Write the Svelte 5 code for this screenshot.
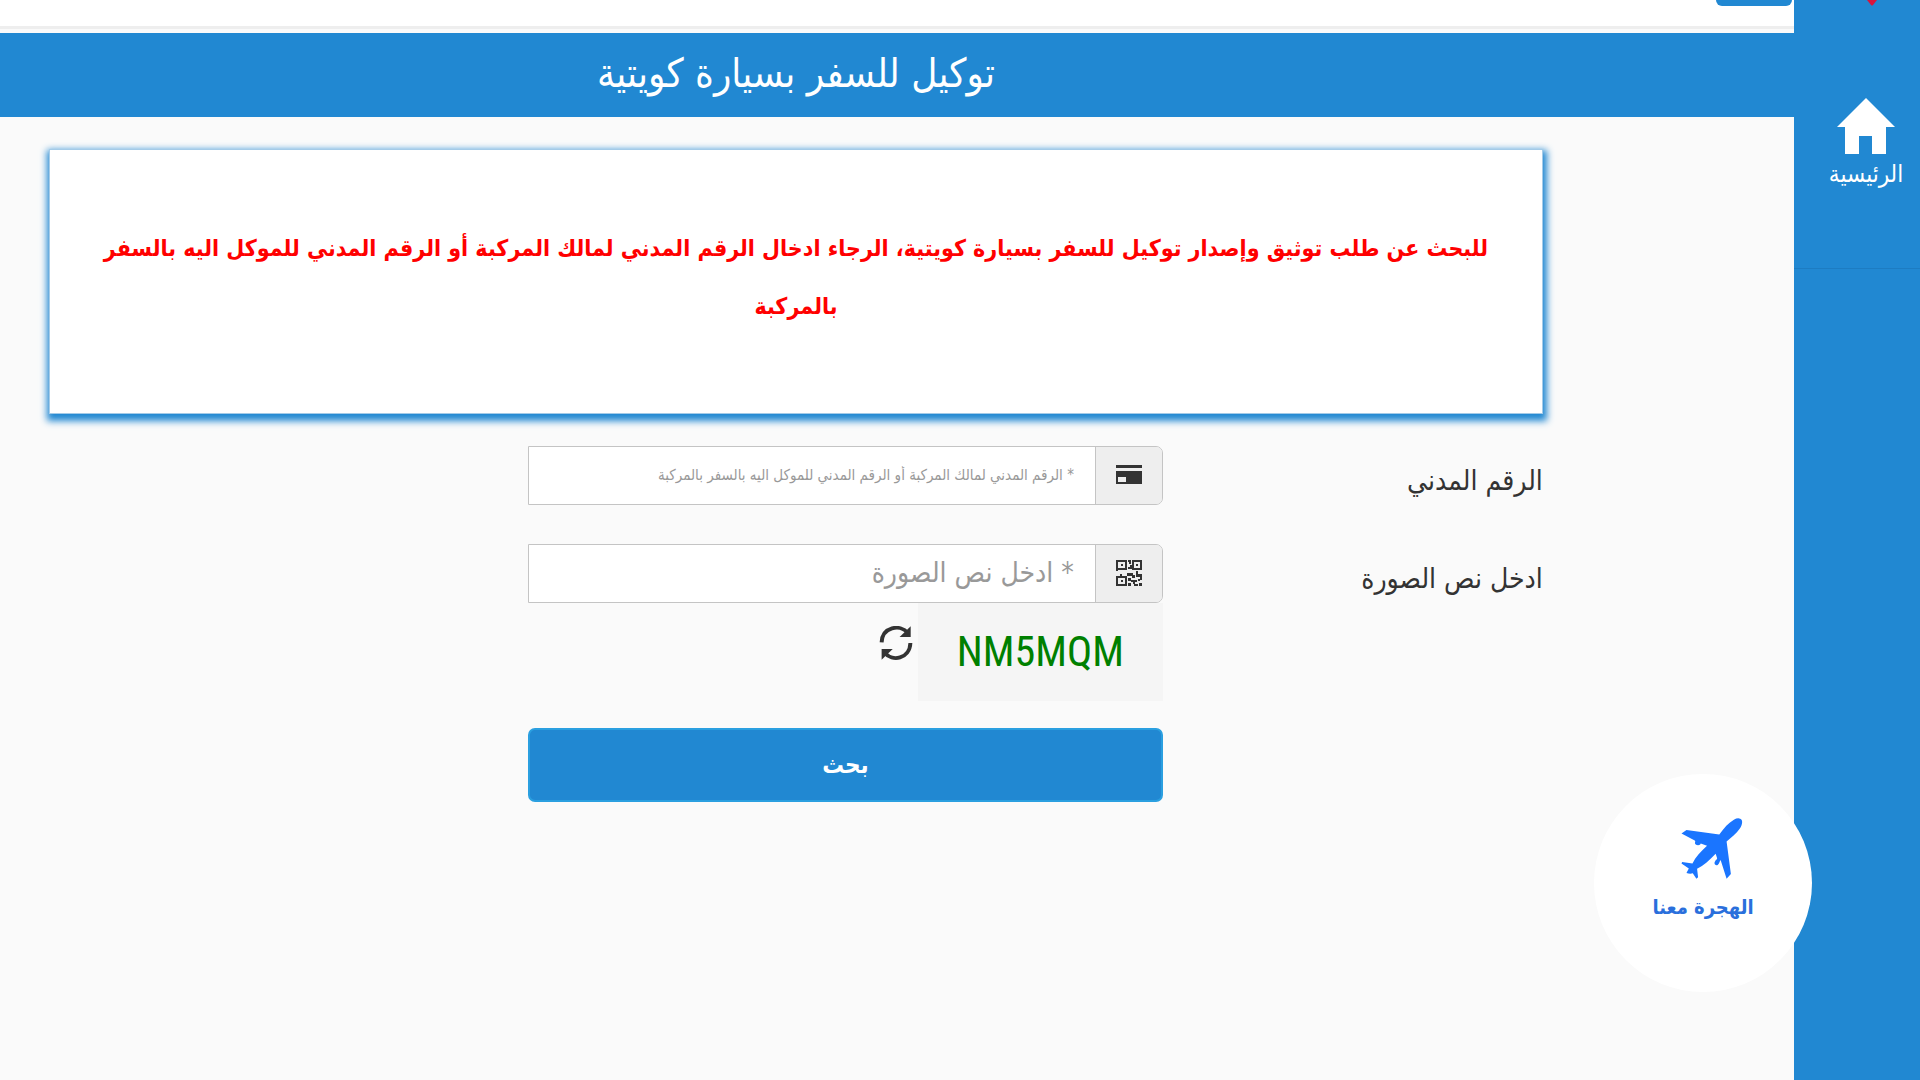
<script>
  let civilId = "";
  let captchaText = "";

  const captcha = "NM5MQM";
</script>

<div class="page" dir="rtl" lang="ar">
  <aside class="sidebar">
    <div class="logo">
      <svg width="12" height="6" viewBox="0 0 12 6" aria-hidden="true">
        <path d="M1 0h10L7 5q-1 1-2 0z" fill="#d9143c" />
      </svg>
    </div>
    <nav>
      <a class="nav-item" href="/">
        <svg width="60" height="56" viewBox="0 0 60 56" fill="#fff" aria-hidden="true">
          <path d="M30 0 59 29H50V56H36V38H23V56H9V29H1z" />
        </svg>
        <span>الرئيسية</span>
      </a>
    </nav>
  </aside>

  <div class="content">
    <header class="topbar">
      <button class="menu-button" type="button" aria-label="القائمة"></button>
    </header>

    <h1 class="title">توكيل للسفر بسيارة كويتية</h1>

    <main>
      <p class="notice">
        للبحث عن طلب توثيق وإصدار توكيل للسفر بسيارة كويتية، الرجاء ادخال الرقم المدني لمالك المركبة أو الرقم المدني للموكل اليه بالسفر بالمركبة
      </p>

      <form on:submit|preventDefault>
        <div class="row">
          <label for="civil-id">الرقم المدني</label>
          <div class="input-group">
            <span class="addon">
              <svg width="26" height="22" viewBox="0 0 26 22" fill="#333" aria-hidden="true">
                <path d="M0 0h26v3H0z" />
                <path fill-rule="evenodd" d="M0 6h26v13H0zM2 12v5h8v-5z" />
              </svg>
            </span>
            <input
              id="civil-id"
              class="small"
              type="text"
              placeholder="* الرقم المدني لمالك المركبة أو الرقم المدني للموكل اليه بالسفر بالمركبة"
              bind:value={civilId}
            />
          </div>
        </div>

        <div class="row">
          <label for="captcha">ادخل نص الصورة</label>
          <div class="field">
            <div class="input-group">
              <span class="addon">
                <svg width="26" height="28" viewBox="0 0 26 28" fill="#333" aria-hidden="true">
                  <path
                    fill-rule="evenodd"
                    d="M0 0h11v10H2v1H0zM2 2v6h7V2zM16 0h10v10H16zM18 2v6h6V2zM0 16h4v-2h2v2h5v10H0zM2 18v6h7v-6z"
                  />
                  <path
                    d="M5 4h2v2H5zM20 4h2v2h-2zM5 20h2v2H5zM12 0h3v4h-2V2h-1zM14 5h2v4h-4V7h2zM20 11h2v3h4v3h-6zM11 13h6v2h2v3h-3v-2h-5zM12 18h3v3h-3zM15 20h6v2h-2v2h-2v-2h-2zM12 23h3v3h-3zM18 24h4v2h-4zM22 19h2v2h-2zM24 17h2v3h-2zM23 23h3v3h-3z"
                  />
                </svg>
              </span>
              <input
                id="captcha"
                type="text"
                placeholder="* ادخل نص الصورة"
                bind:value={captchaText}
              />
            </div>
            <div class="captcha">
              <span class="captcha-image">{captcha}</span>
              <button class="refresh" type="button" aria-label="تحديث">
                <svg width="34" height="34" viewBox="54 255 104 104" aria-hidden="true">
                  <g fill="none" stroke="#333" stroke-width="12">
                    <path d="M62 305C64 258 118 248 142 276" />
                    <path d="M150 307C148 356 94 366 71 336" />
                  </g>
                  <path d="M151 256V289H117z" fill="#333" />
                  <path d="M62 358V325H96z" fill="#333" />
                </svg>
              </button>
            </div>
          </div>
        </div>

        <div class="row">
          <button class="submit" type="submit">بحث</button>
        </div>
      </form>
    </main>
  </div>

  <a class="badge" href="/">
    <svg width="62" height="61" viewBox="274 142 186 184" fill="#1a75ff" aria-hidden="true">
      <path
        d="M452 144C461 147 459 162 451 174 440 190 425 202 411 213L424 311 411 325 393 269C389 274 390 280 384 284 377 287 372 280 376 273 378 267 384 267 382 262L378 250C360 269 342 286 322 295L325 321 320 325 309 309Q300 311 290 308L297 294 275 279 277 275 308 279C317 260 334 243 352 226L333 219C332 225 322 226 317 221 313 216 319 213 315 210L275 189 290 178 389 192C403 172 417 156 433 147Q444 141 452 144z"
      />
    </svg>
    <span>الهجرة معنا</span>
  </a>
</div>

<style>
  :global(body) {
    background: #fafafa;
  }

  .page {
    display: flex;
    min-height: 100vh;
    font-family: "DejaVu Sans Condensed", "DejaVu Sans", sans-serif;
    color: #333;
  }

  .sidebar {
    flex: 0 0 126px;
    background: #2188d2;
  }

  .logo {
    display: flex;
    justify-content: center;
    height: 48px;
    padding-left: 30px;
  }

  .nav-item {
    display: flex;
    flex-direction: column;
    align-items: center;
    gap: 2px;
    height: 170px;
    padding: 50px 0 0 18px;
    border-bottom: 1px solid #1d7cc2;
    color: #fff;
    font-size: 24px;
    line-height: 36px;
    text-decoration: none;
  }

  .content {
    flex: 1;
    min-width: 0;
  }

  .topbar {
    height: 26px;
    padding: 0 2px;
    background: #fff;
    border-bottom: 3px solid #eee;
  }

  .menu-button {
    display: block;
    width: 76px;
    height: 6px;
    padding: 0;
    border: 0;
    border-radius: 0 0 6px 6px;
    background: #2188d2;
  }

  .title {
    margin: 4px 0 0;
    padding: 0 202px 4px 0;
    background: #2188d2;
    color: #fff;
    font-size: 40px;
    font-weight: 400;
    line-height: 80px;
    text-align: center;
  }

  main {
    padding: 32px 14% 32px 49px;
  }

  .notice {
    margin: 0 0 32px;
    padding: 69px 48px 78px;
    border: 1px solid #a4cbe8;
    background: #fff;
    box-shadow: 1px 4px 7px 3px #2188d2;
    color: #f00;
    font-size: 23px;
    font-weight: 700;
    line-height: 58px;
    text-align: center;
  }

  .row {
    display: grid;
    grid-template-columns: 380fr 635fr 479fr;
    margin-bottom: 34px;
  }

  .row:nth-child(2) {
    margin-bottom: 27px;
  }

  label {
    padding-top: 6px;
    font-size: 28px;
    line-height: 58px;
  }

  .input-group {
    display: flex;
    height: 59px;
    box-sizing: border-box;
    border: 1px solid #c4c4c4;
    border-radius: 0 7px 7px 0;
    overflow: hidden;
  }

  .addon {
    display: flex;
    align-items: center;
    justify-content: center;
    flex: 0 0 66px;
    border-left: 1px solid #c4c4c4;
    background: #eee;
  }

  input {
    flex: 1;
    min-width: 0;
    padding: 0 21px 2px;
    border: 0;
    background: #fff;
    font-family: inherit;
    font-size: 28px;
    color: #555;
  }

  input::placeholder {
    color: #999;
    opacity: 1;
  }

  input.small {
    font-size: 15px;
  }

  .captcha {
    display: flex;
    align-items: flex-start;
    gap: 5px;
  }

  .captcha-image {
    width: 245px;
    background: #f5f5f5;
    color: #008000;
    font-family: "Liberation Sans Narrow", "Roboto Condensed", "Liberation Sans", sans-serif;
    font-size: 42px;
    line-height: 98px;
    text-align: center;
  }

  .refresh {
    padding: 23px 0 0;
    border: 0;
    background: none;
  }

  .refresh svg {
    display: block;
  }

  .submit {
    grid-column: 2;
    height: 74px;
    border: 2px solid #2a9fe0;
    border-radius: 7px;
    background: #2188d2;
    color: #fff;
    font-family: inherit;
    font-size: 24px;
    font-weight: 700;
  }

  .badge {
    position: fixed;
    right: 108px;
    bottom: 88px;
    display: flex;
    flex-direction: column;
    align-items: center;
    box-sizing: border-box;
    width: 218px;
    height: 218px;
    padding-top: 44px;
    border-radius: 50%;
    background: #fff;
    color: #2a6fdc;
    font-size: 20px;
    font-weight: 700;
    line-height: 56px;
    text-decoration: none;
  }

  .badge svg {
    margin-left: 18px;
  }
</style>
